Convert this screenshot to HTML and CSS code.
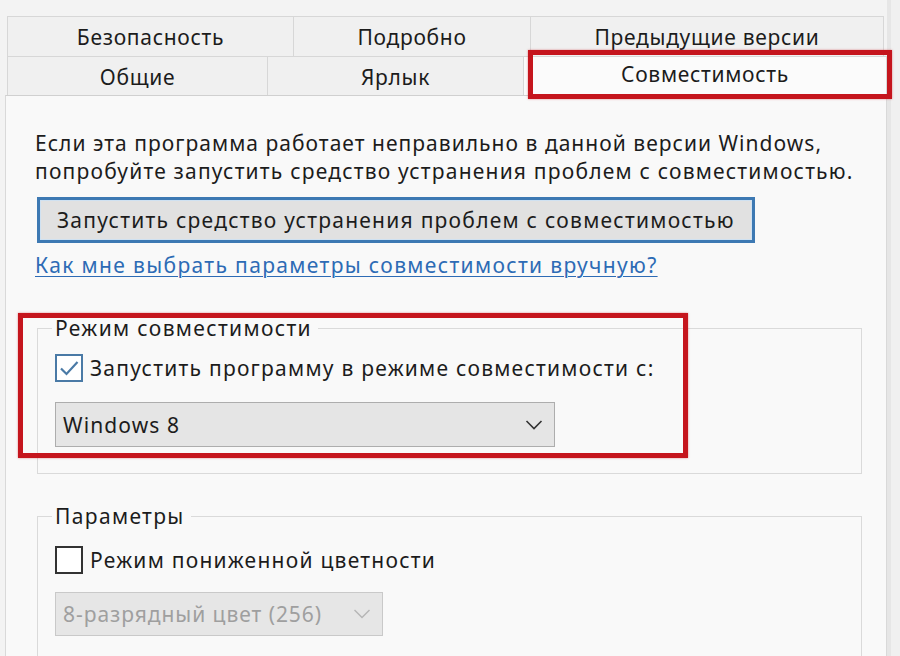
FILE: index.html
```html
<!DOCTYPE html>
<html lang="ru">
<head>
<meta charset="utf-8">
<title>Совместимость</title>
<link rel="stylesheet" href="styles.css">
</head>
<body>
<div class="dialog">
  <div class="tab-row row-back">
    <div class="tab t-sec">Безопасность</div>
    <div class="tab t-det">Подробно</div>
    <div class="tab t-prev">Предыдущие версии</div>
  </div>
  <div class="tab-row row-front">
    <div class="tab t-gen">Общие</div>
    <div class="tab t-lnk">Ярлык</div>
    <div class="tab t-comp selected">Совместимость</div>
  </div>
  <div class="panel">
    <p class="intro">Если эта программа работает неправильно в данной версии Windows,<br><span class="line2">попробуйте запустить средство устранения проблем с совместимостью.</span></p>
    <button class="run-btn" type="button">Запустить средство устранения проблем с совместимостью</button>
    <a class="help-link" href="#">Как мне выбрать параметры совместимости вручную?</a>

    <fieldset class="group group-mode">
      <legend>Режим совместимости</legend>
      <label class="check-row">
        <span class="box checked">
          <svg width="24" height="24" viewBox="0 0 24 24"><path d="M4 12.5 L9.5 18 L20.5 6" fill="none" stroke="#4a7aa6" stroke-width="2.2"/></svg>
        </span>
        <span class="check-label">Запустить программу в режиме совместимости с:</span>
      </label>
      <div class="select select-os">
        <span>Windows 8</span>
        <svg class="chev" width="18" height="12" viewBox="0 0 18 12"><path d="M1.5 2 L9 9.5 L16.5 2" fill="none" stroke="#333" stroke-width="1.6"/></svg>
      </div>
    </fieldset>

    <fieldset class="group group-params">
      <legend>Параметры</legend>
      <label class="check-row">
        <span class="box"></span>
        <span class="check-label">Режим пониженной цветности</span>
      </label>
      <div class="select select-color disabled">
        <span>8-разрядный цвет (256)</span>
        <svg class="chev" width="18" height="12" viewBox="0 0 18 12"><path d="M1.5 2 L9 9.5 L16.5 2" fill="none" stroke="#b5b5b5" stroke-width="1.4"/></svg>
      </div>
    </fieldset>
  </div>

  <div class="mark mark-tab"></div>
  <div class="mark mark-mode"></div>
</div>
</body>
</html>
```

FILE: styles.css
```css
* { box-sizing: border-box; }

html, body {
  margin: 0;
  padding: 0;
}

body {
  width: 900px;
  height: 656px;
  overflow: hidden;
  background: #eeeeee;
  font-family: "Noto Sans", "Open Sans", sans-serif;
  font-size: 21px;
  color: #1c1c1c;
}

.dialog {
  position: relative;
  width: 900px;
  height: 656px;
  overflow: hidden;
  padding-top: 16px;
  background: linear-gradient(to right, #f3f3f3 0, #f3f3f3 887px, #e6e6e6 887px, #e6e6e6 891px, #f0f0f0 891px);
}

.tab-row {
  display: flex;
  margin-left: 7px;
}

.tab {
  display: flex;
  align-items: center;
  justify-content: center;
  background: #f0f0f0;
  border: 1px solid #d7d7d7;
  border-bottom: none;
  margin-right: -1px;
  letter-spacing: 0.7px;
  line-height: 1;
}

.row-back .tab { height: 40px; padding-top: 2px; }
.row-front .tab { height: 39px; padding-top: 2px; }

.t-sec { width: 287px; }
.t-det { width: 238px; }
.t-prev { width: 354px; }
.t-gen { width: 261px; }
.t-lnk { width: 257px; }
.t-comp { width: 364px; }

.tab.selected {
  background: #fbfbfb;
  padding-top: 0;
  padding-bottom: 4px;
}

.panel {
  margin-left: 5px;
  width: 882px;
  height: 570px;
  background: #f9f9f9;
  border: 1px solid #d9d9d9;
  border-top-color: #d0d0d0;
  padding: 33px 0 0 29px;
  letter-spacing: 1.1px;
}

.intro {
  margin: 0;
  line-height: 28px;
  letter-spacing: 1.03px;
}

.intro .line2 { letter-spacing: 1.2px; }

.run-btn {
  display: block;
  margin: 12px 0 0 2px;
  width: 718px;
  height: 46px;
  padding: 0 0 0 17px;
  text-align: left;
  font: inherit;
  letter-spacing: 1.25px;
  color: #1c1c1c;
  background: #e1e1e1;
  border: 3px solid #3d79b3;
  box-shadow: inset 0 0 0 1px #cfe1f1;
}

.help-link {
  display: inline-block;
  margin-top: 8px;
  line-height: 28px;
  letter-spacing: 1.35px;
  color: #2d6bb5;
  text-decoration: underline;
  text-underline-offset: 3px;
  text-decoration-thickness: 1px;
}

.group {
  margin: 0 0 0 2px;
  width: 825px;
  border: 1px solid #dadada;
  padding: 0 17px;
  min-width: 0;
}

.group legend {
  padding: 0 6px 0 3px;
  margin-left: -3px;
  line-height: 28px;
  letter-spacing: 1.35px;
}

.group-mode {
  margin-top: 35px;
  padding-top: 11px;
  padding-bottom: 26px;
}

.group-params {
  margin-top: 28px;
  padding-top: 15px;
  height: 160px;
}

.check-row {
  display: flex;
  align-items: center;
  gap: 7px;
  height: 30px;
}

.check-label { letter-spacing: 1.25px; }

.box {
  width: 28px;
  height: 28px;
  flex: none;
  display: flex;
  align-items: center;
  justify-content: center;
  background: #ffffff;
  border: 2px solid #333333;
}

.box.checked {
  border-color: #4a7aa6;
}

.select {
  display: flex;
  align-items: center;
  justify-content: space-between;
  margin-top: 19px;
  height: 45px;
  padding: 0 11px 0 7px;
  background: #e5e5e5;
  border: 1px solid #adadad;
}

.select-os { width: 500px; }

.select-color {
  width: 328px;
  height: 44px;
  margin-top: 17px;
  color: #9f9f9f;
  background: #e6e6e6;
  border-color: #c9c9c9;
}

.select-color span { letter-spacing: 0.95px; }

.mark {
  position: absolute;
  border: 5px solid #c5151d;
  box-shadow: 0 0 2px rgba(200, 20, 30, 0.5);
  pointer-events: none;
}

.mark-tab {
  left: 528px;
  top: 50px;
  width: 364px;
  height: 49px;
}

.mark-mode {
  left: 18px;
  top: 313px;
  width: 670px;
  height: 145px;
}
```
